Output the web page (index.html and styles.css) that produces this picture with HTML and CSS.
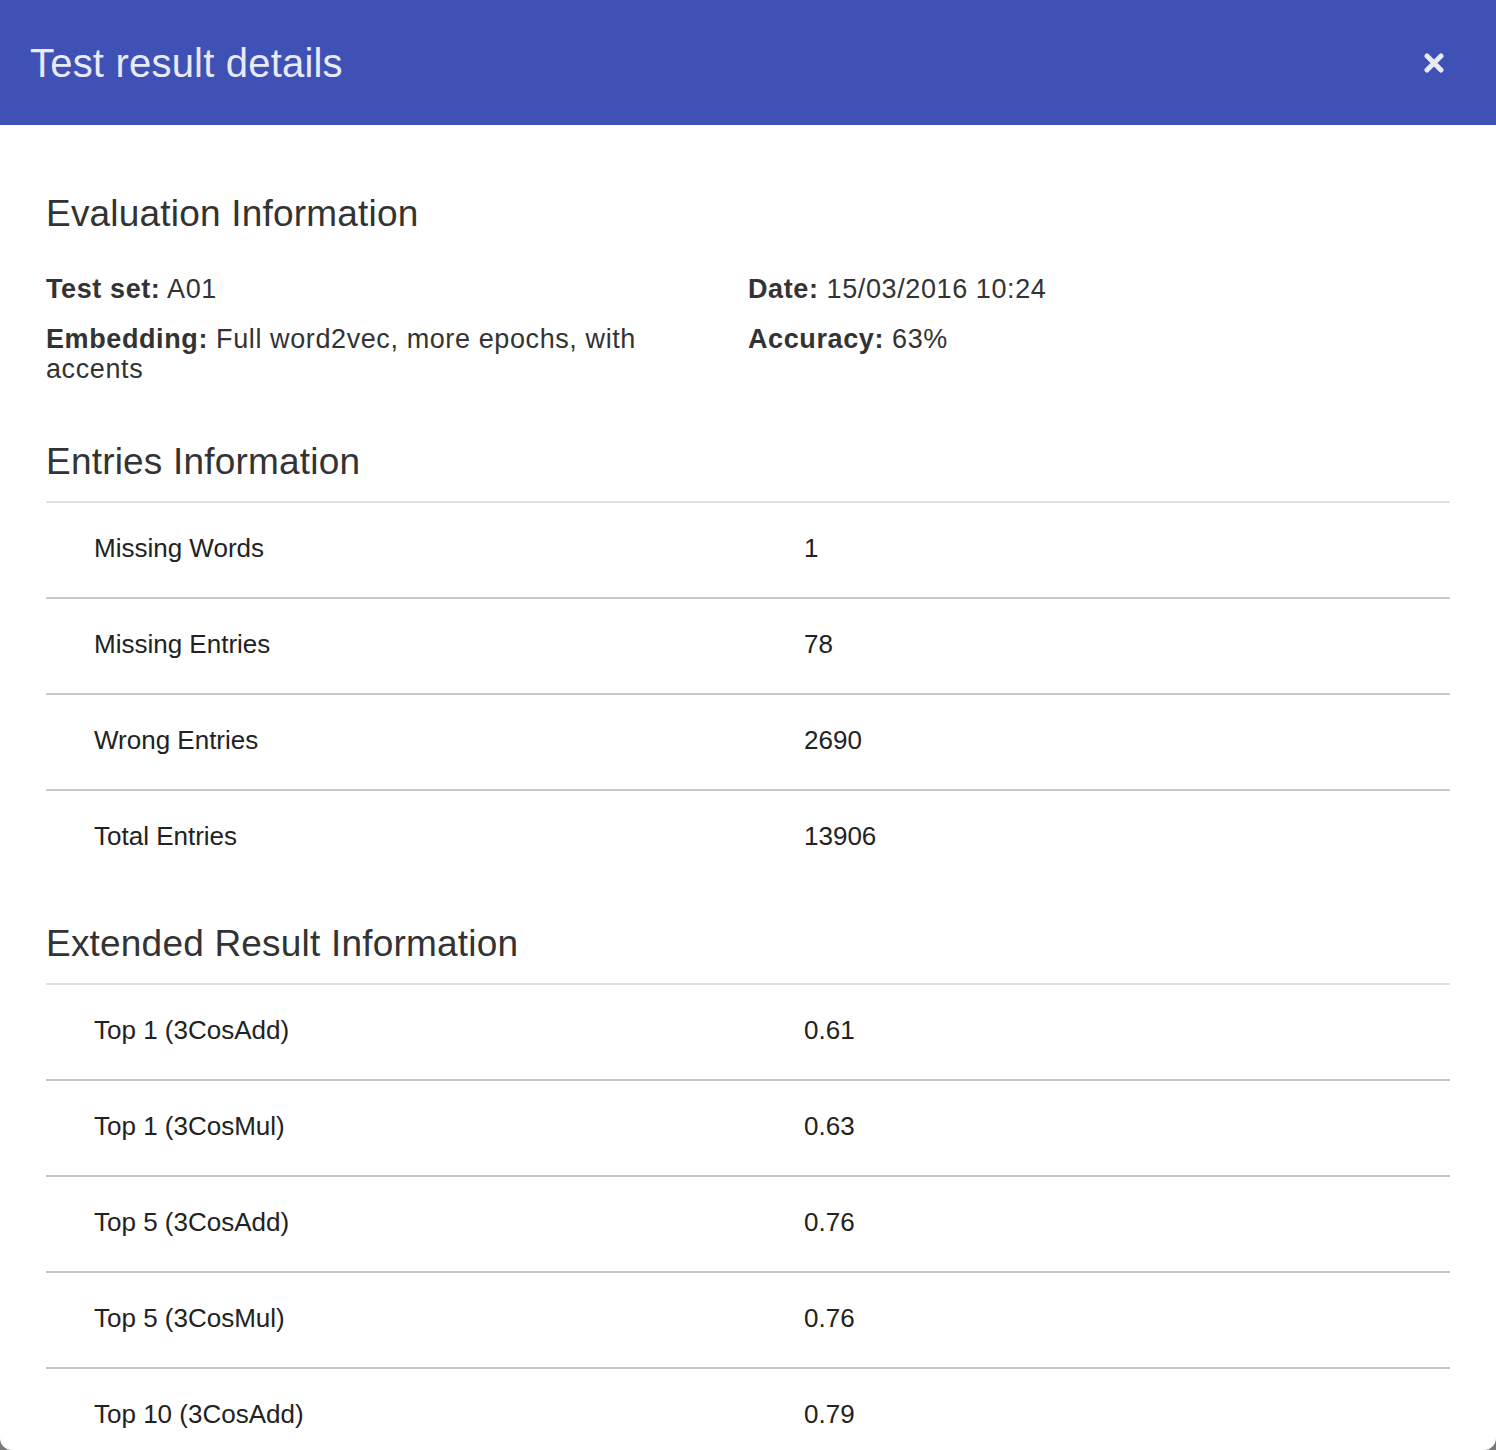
FILE: index.html
```html
<!DOCTYPE html>
<html>
<head>
<meta charset="utf-8">
<link rel="stylesheet" href="styles.css">
</head>
<body>
<div class="modal">
  <div class="modal-header">
    <h1 class="modal-title">Test result details</h1>
    <button class="close" aria-label="Close">
      <svg width="20" height="20" viewBox="0 0 20 20"><path d="M3 3 L17 17 M17 3 L3 17" stroke="#e8eaf6" stroke-width="5" stroke-linecap="round"/></svg>
    </button>
  </div>
  <div class="modal-body">
    <h2 class="section-title first">Evaluation Information</h2>
    <div class="info-grid">
      <div class="info-item"><b>Test set:</b> A01</div>
      <div class="info-item"><b>Date:</b> 15/03/2016 10:24</div>
      <div class="info-item"><b>Embedding:</b> Full word2vec, more epochs, with accents</div>
      <div class="info-item"><b>Accuracy:</b> 63%</div>
    </div>

    <h2 class="section-title">Entries Information</h2>
    <div class="table">
      <div class="row"><div class="cell">Missing Words</div><div class="cell">1</div></div>
      <div class="row"><div class="cell">Missing Entries</div><div class="cell">78</div></div>
      <div class="row"><div class="cell">Wrong Entries</div><div class="cell">2690</div></div>
      <div class="row"><div class="cell">Total Entries</div><div class="cell">13906</div></div>
    </div>

    <h2 class="section-title second">Extended Result Information</h2>
    <div class="table">
      <div class="row"><div class="cell">Top 1 (3CosAdd)</div><div class="cell">0.61</div></div>
      <div class="row"><div class="cell">Top 1 (3CosMul)</div><div class="cell">0.63</div></div>
      <div class="row"><div class="cell">Top 5 (3CosAdd)</div><div class="cell">0.76</div></div>
      <div class="row"><div class="cell">Top 5 (3CosMul)</div><div class="cell">0.76</div></div>
      <div class="row"><div class="cell">Top 10 (3CosAdd)</div><div class="cell">0.79</div></div>
    </div>
  </div>
</div>
</body>
</html>
```
FILE: styles.css
```css
html, body {
  margin: 0;
  padding: 0;
  background: #7a7a7a;
}
body {
  font-family: "Liberation Sans", Arial, sans-serif;
  color: #333;
}
.modal {
  width: 1496px;
  height: 1450px;
  overflow: hidden;
  background: #fff;
  border-radius: 0 0 12px 12px;
}
.modal-header {
  height: 125px;
  background: #3f51b5;
  display: flex;
  align-items: center;
  justify-content: space-between;
  padding: 0 52px 0 30px;
  box-sizing: border-box;
}
.modal-title {
  margin: 0;
  font-weight: normal;
  font-size: 40px;
  letter-spacing: 0.2px;
  color: #e8eaf6;
  line-height: 1;
}
.close {
  background: none;
  border: 0;
  padding: 0;
  width: 20px;
  height: 20px;
  display: flex;
}
.modal-body {
  padding: 0 46px;
}
.section-title {
  margin: 0;
  font-weight: normal;
  font-size: 37px;
  letter-spacing: 0.2px;
  line-height: 40px;
  color: #333;
  padding-bottom: 19px;
}
.section-title.first {
  padding-top: 69px;
  padding-bottom: 40px;
}
.section-title.second {
  margin-top: 39px;
}
.info-grid {
  display: grid;
  grid-template-columns: 702px 702px;
  row-gap: 20px;
  font-size: 27px;
  letter-spacing: 0.6px;
  line-height: 30px;
  margin-bottom: 58px;
}
.info-item {
  padding-right: 40px;
}
.info-item b {
  font-weight: bold;
}
.table {
  font-size: 26px;
  color: #222;
}
.row {
  display: grid;
  grid-template-columns: 710px 1fr;
  height: 96px;
  box-sizing: border-box;
  border-top: 2px solid #c8c8c8;
  align-items: center;
}
.row:first-child {
  border-top-color: #e0e0e0;
}
.cell {
  padding-left: 48px;
  padding-bottom: 5px;
  line-height: 30px;
}
```
